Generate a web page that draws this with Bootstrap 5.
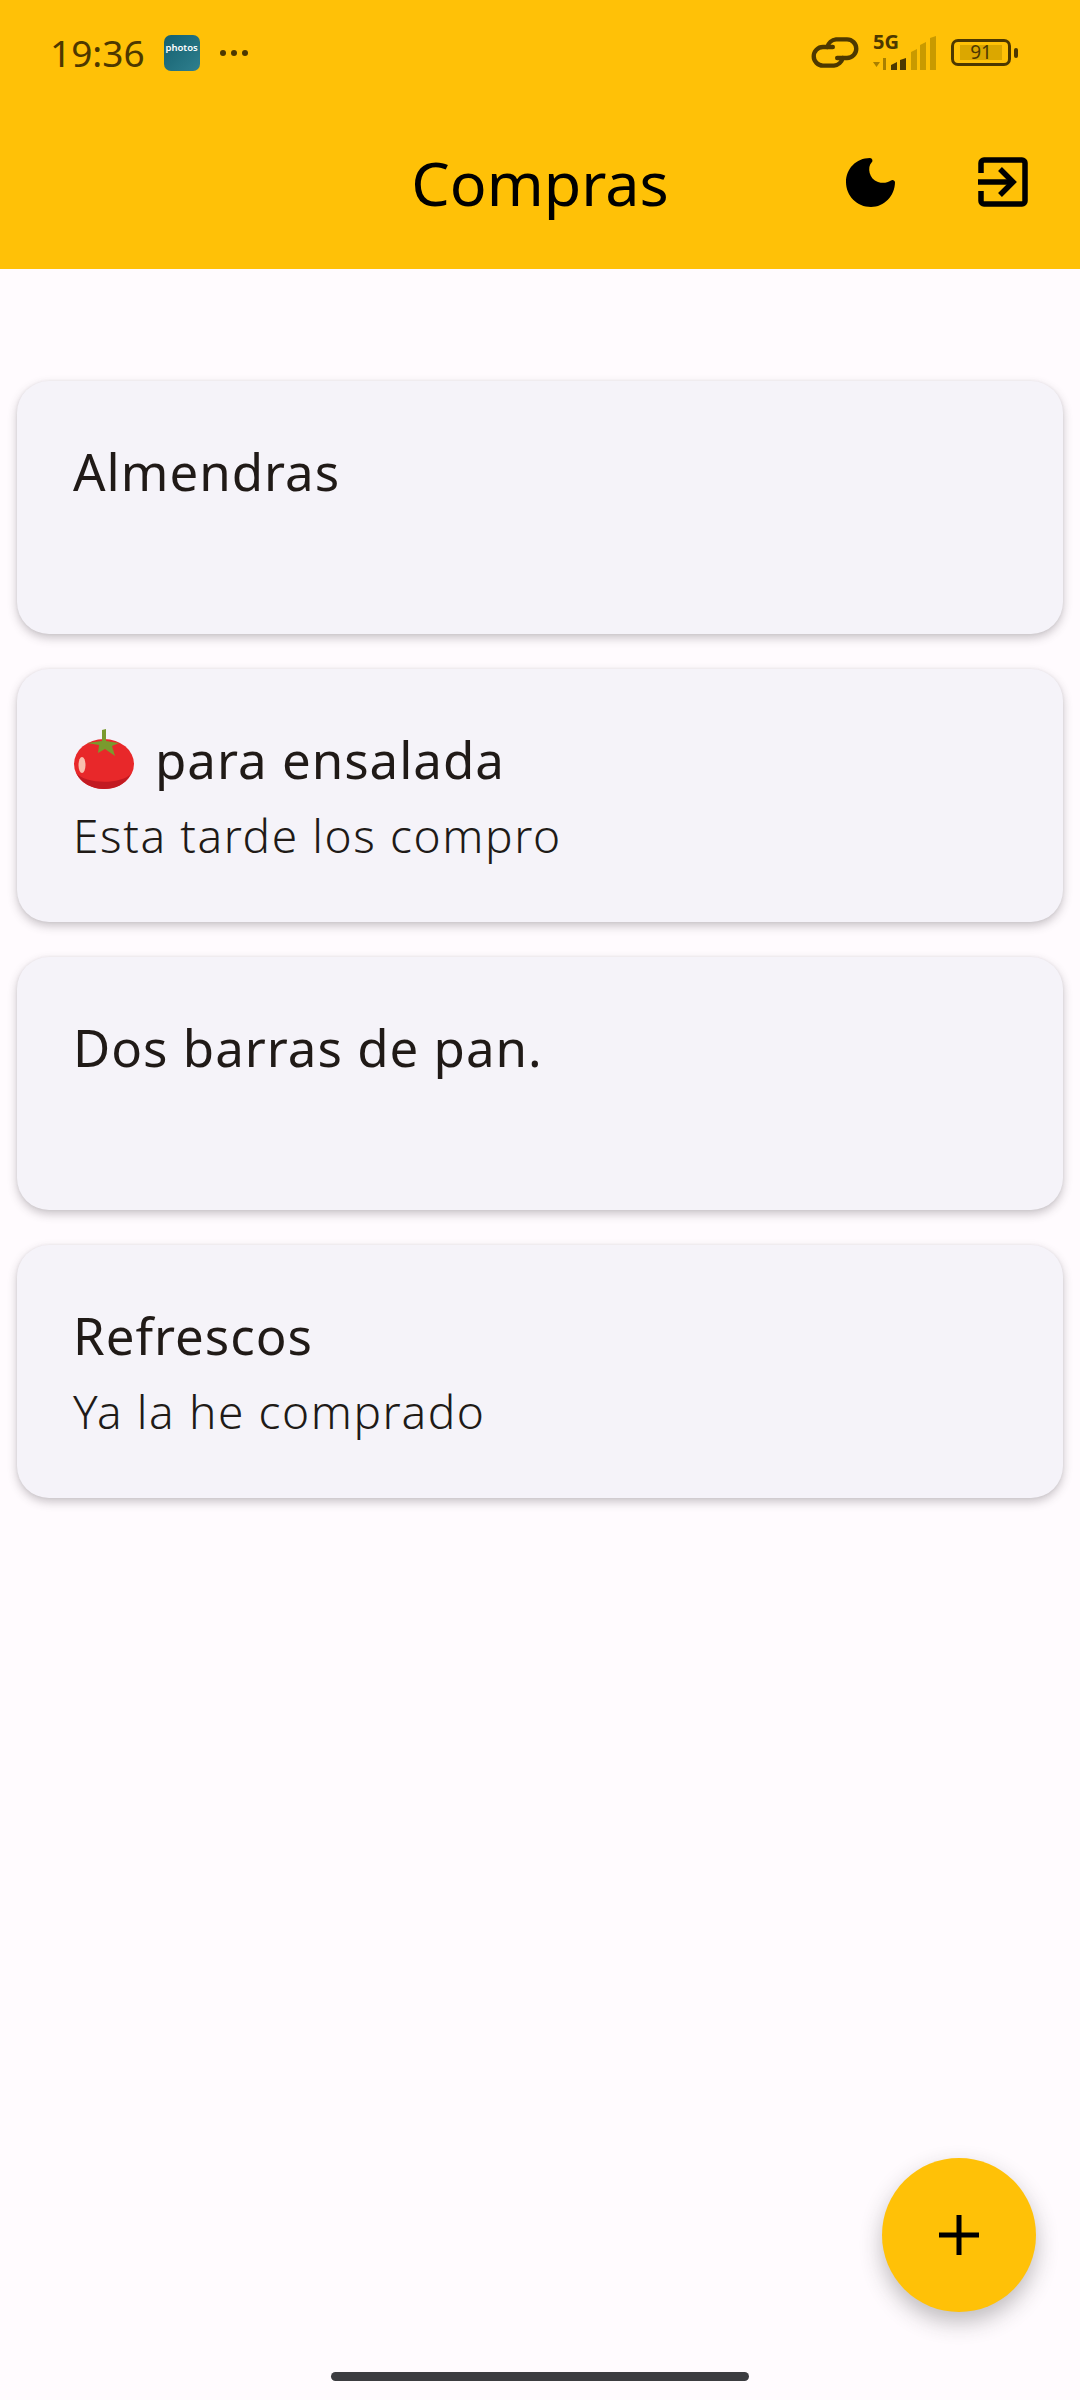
<!DOCTYPE html>
<html lang="es">
<head>
<meta charset="utf-8">
<title>Compras</title>
<link href="https://cdn.jsdelivr.net/npm/bootstrap@5.3.0/dist/css/bootstrap.min.css" rel="stylesheet">
<style>
html,body{margin:0;background:#fffbfe;}
.screen{width:1080px;height:2400px;background:#fffbfe;font-family:"Noto Sans","Liberation Sans",sans-serif;color:#201a17;overflow:hidden;}
.appbar{background:#ffc107;height:269px;flex:none;}
.sbar{height:105px;padding:0 62px 0 50px;color:#4d3800;}
.clock{font-size:37px;line-height:1;margin-right:19px;}
.appicon{width:36px;height:36px;border-radius:7px;background:linear-gradient(135deg,#14606f,#2f7f8e);color:#fff;font-size:9.5px;line-height:1;padding-top:8px;text-align:center;font-weight:600;}
.dots{margin-left:20px;gap:5px;}
.dots i{display:block;width:6px;height:6px;border-radius:50%;background:#4d3800;}
.net{width:66px;height:36px;position:relative;}
.net-t{position:absolute;left:1px;top:-4px;font-size:20px;line-height:1.1;font-weight:700;color:#4d3800;}
.batt{width:60px;height:27px;border:3px solid #4d3800;border-radius:7px;padding:3px 6px;}
.batt-f{height:100%;background:#dba700;font-size:19px;line-height:15px;text-align:center;color:#4d3800;}
.batt-n{width:4px;height:10px;border-radius:2px;background:#4d3800;margin-left:3px;}
.tbar{height:164px;padding-bottom:10px;display:grid;grid-template-columns:1fr auto 1fr;align-items:center;color:#000;}
.ttl{font-size:61px;line-height:1;font-weight:400;margin:0;}
.acts{justify-self:end;padding-right:52px;gap:82px;}
.cards{padding:112px 17px 0;gap:35px;}
.itm{height:253px;border-radius:32px;background:#f5f3f9;border:0;box-shadow:0 4px 10px rgba(60,55,60,.28),0 0 3px rgba(60,55,60,.08);padding:57px 56px 0;}
.itm-t{font-size:51px;line-height:66px;letter-spacing:1px;margin:0;display:flex;align-items:center;gap:20px;color:#201a17;font-weight:400;}
.itm-s{font-size:46px;line-height:60px;letter-spacing:1.6px;margin:13px 0 0;color:#201a17;font-weight:300;}
.fabrow{padding:0 44px 60px 0;}
.fab{width:154px;height:154px;border-radius:50%;background:#ffc107;border:0;padding:0;box-shadow:0 10px 22px rgba(40,40,40,.3);}
.fab:hover,.fab:active{background:#ffc107;}
.hbar{width:418px;height:9px;border-radius:5px;background:#3c3c40;margin:0 auto 19px;flex:none;}
</style>
</head>
<body>
<div class="screen d-flex flex-column">
  <header class="appbar">
    <div class="sbar d-flex align-items-center">
      <span class="clock">19:36</span>
      <span class="appicon">photos</span>
      <span class="dots d-flex"><i></i><i></i><i></i></span>
      <div class="ms-auto d-flex align-items-center" style="gap:13px">
        <svg width="44" height="32" viewBox="0 0 44 32" fill="none" stroke="#4d3800" stroke-width="4" stroke-linecap="round" style="width:48px;height:35px"><path d="M20 11H11a8.500 8.500 0 0 0 0 17h10a9 9 0 0 0 8-7"/><path d="M24 21h9a8.500 8.500 0 0 0 0-17H23a9 9 0 0 0-8 7"/></svg>
        <div class="net"><span class="net-t">5G</span><svg class="d-block" width="66" height="36" viewBox="0 0 66 36"><path d="M1 27h7l-3.500 5zM11 23h3v12h-3z" fill="#a98000"/><path d="M19 35v-5l6-3v8zM28 35v-10l6-2v12z" fill="#4d3800"/><path d="M39 35V17l6-3v21zM48 35V10l6-3v28zM58 35V3l6-2v34z" fill="#c99a00"/></svg></div>
        <div class="d-flex align-items-center"><div class="batt"><div class="batt-f">91</div></div><span class="batt-n"></span></div>
      </div>
    </div>
    <div class="tbar">
      <span></span>
      <h1 class="ttl">Compras</h1>
      <div class="acts d-flex align-items-center">
        <svg width="50" height="50" viewBox="0 0 50 50"><path d="M24 1a2.500 2.500 0 0 1 1.600 4.400C21 10 23 22 32 25c5 1.600 9 .8 13-1.500a2.500 2.500 0 0 1 4 1.500C49 39 38 50 25 50 11 50 0 39 0 25 0 12 10 1 24 1z" fill="#000"/></svg>
        <svg width="50" height="50" viewBox="0 0 50 50" fill="none" stroke="#000" stroke-width="5.500"><path d="M3 16V6a3 3 0 0 1 3-3h38a3 3 0 0 1 3 3v38a3 3 0 0 1-3 3H6a3 3 0 0 1-3-3V34"/><path d="M0 25h36"/><path d="M22 12l13 13-13 13"/></svg>
      </div>
    </div>
  </header>
  <main class="cards d-flex flex-column">
    <div class="card itm"><p class="itm-t">Almendras</p></div>
    <div class="card itm">
      <p class="itm-t"><svg width="62" height="60" viewBox="0 0 62 60" aria-label="tomate"><ellipse cx="31" cy="35" rx="30" ry="25" fill="#e8282a"/><path d="M3 44c9 11 44 12 55 1-6 11-16 15-27 15-12 0-23-6-28-16z" fill="#c21a22"/><ellipse cx="9" cy="36" rx="3.500" ry="8" fill="#f9bfae"/><path d="M29 1l4-1 0 12 13 2-7 3 3 10-10-7-7 4 1-8-12-2 15-2z" fill="#7a9a2e"/></svg>para ensalada</p>
      <p class="itm-s">Esta tarde los compro</p>
    </div>
    <div class="card itm"><p class="itm-t">Dos barras de pan.</p></div>
    <div class="card itm">
      <p class="itm-t">Refrescos</p>
      <p class="itm-s">Ya la he comprado</p>
    </div>
  </main>
  <div class="fabrow mt-auto d-flex justify-content-end">
    <button class="fab btn d-flex align-items-center justify-content-center" aria-label="Añadir"><svg width="40" height="40" viewBox="0 0 40 40"><path d="M17.500 0h5v17.500H40v5H22.500V40h-5V22.500H0v-5h17.500z" fill="#000"/></svg></button>
  </div>
  <div class="hbar"></div>
</div>
<script src="https://cdn.jsdelivr.net/npm/bootstrap@5.3.0/dist/js/bootstrap.bundle.min.js"></script>
</body>
</html>
